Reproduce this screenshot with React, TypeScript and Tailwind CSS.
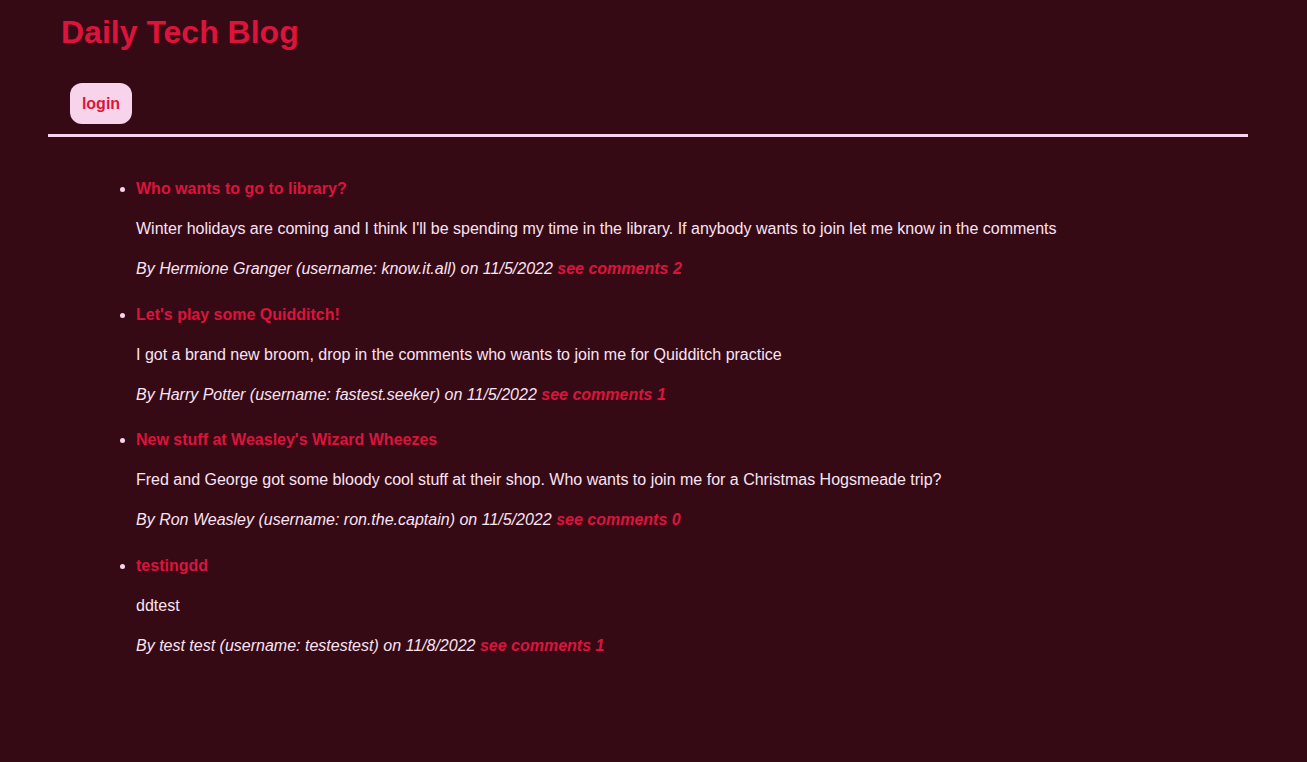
const POSTS = [
  {
    title: "Who wants to go to library?",
    body: "Winter holidays are coming and I think I'll be spending my time in the library. If anybody wants to join let me know in the comments",
    author: "Hermione Granger",
    username: "know.it.all",
    date: "11/5/2022",
    comments: 2,
  },
  {
    title: "Let's play some Quidditch!",
    body: "I got a brand new broom, drop in the comments who wants to join me for Quidditch practice",
    author: "Harry Potter",
    username: "fastest.seeker",
    date: "11/5/2022",
    comments: 1,
  },
  {
    title: "New stuff at Weasley's Wizard Wheezes",
    body: "Fred and George got some bloody cool stuff at their shop. Who wants to join me for a Christmas Hogsmeade trip?",
    author: "Ron Weasley",
    username: "ron.the.captain",
    date: "11/5/2022",
    comments: 0,
  },
  {
    title: "testingdd",
    body: "ddtest",
    author: "test test",
    username: "testestest",
    date: "11/8/2022",
    comments: 1,
  },
];

export default function App() {
  return (
    <div className="min-h-[762px] bg-[#350a15] font-['Liberation_Sans',Arial,sans-serif] text-[#fbe3f3]">
      {/* Header */}
      <header className="ml-[48px] w-[1200px] border-b-[3px] border-[#f8d4ec]">
        <h1 className="pl-[13px] pt-[12px] text-[32px] font-bold leading-[40px] text-[#dc143c]">
          Daily Tech Blog
        </h1>
        <nav className="pl-[22px] pt-[31px] pb-[10px]">
          <a
            href="#"
            className="inline-flex h-[41px] w-[62px] items-center justify-center rounded-[12px] bg-[#f8d4ec] text-[16px] font-bold text-[#dc143c]"
          >
            login
          </a>
        </nav>
      </header>

      {/* Posts */}
      <ul className="list-disc space-y-[21.5px] pl-[136px] pt-[40px] marker:text-[#f8d4ec]">
        {POSTS.map((post) => (
          <li key={post.title} className="text-[16px] leading-[24px]">
            <a href="#" className="block font-bold text-[#dc143c]">
              {post.title}
            </a>
            <p className="mt-[16px]">{post.body}</p>
            <p className="mt-[16px] italic">
              By {post.author} (username: {post.username}) on {post.date}{" "}
              <a href="#" className="font-bold text-[#dc143c]">
                see comments {post.comments}
              </a>
            </p>
          </li>
        ))}
      </ul>
    </div>
  );
}
